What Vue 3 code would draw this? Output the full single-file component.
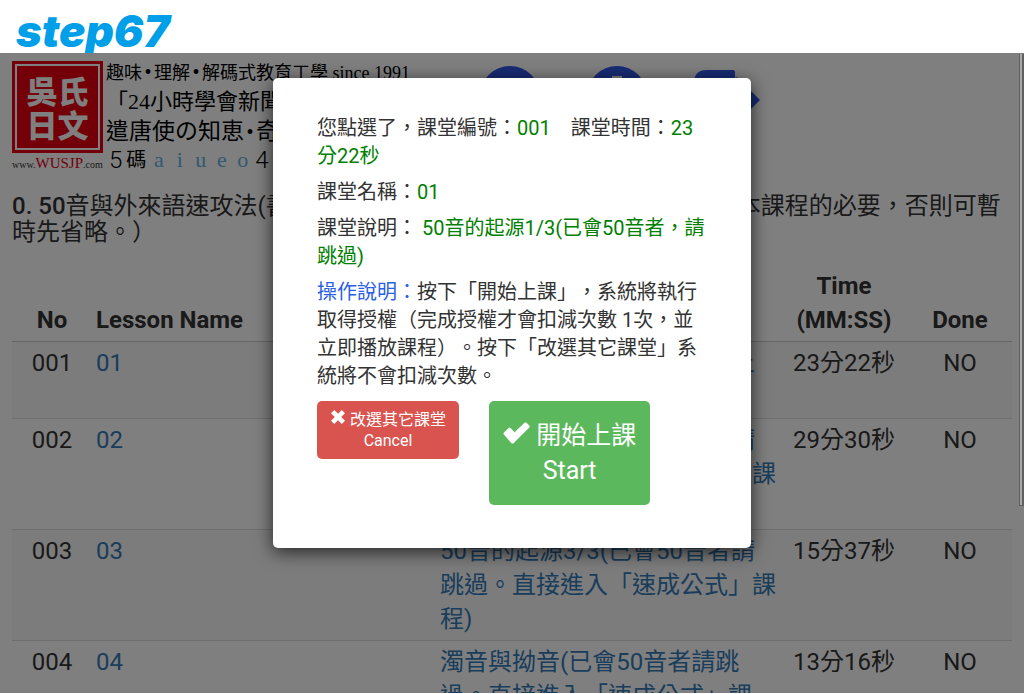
<template>
  <div class="tutorial">
    <h1 class="step-title">step67</h1>

    <div class="screen">
      <main class="page">
        <!-- Banner -->
        <header class="banner">
          <div class="brand">
            <div class="seal">
              <div class="seal-inner">
                <span>吳氏</span>
                <span>日文</span>
              </div>
            </div>
            <a href="#" class="site">www.<b>WUSJP</b>.com</a>
          </div>
          <div class="slogan">
            <p class="first">趣味<i>•</i>理解<i>•</i>解碼式教育工學 since 1991</p>
            <p>「24小時學會新聞」</p>
            <p class="third">遣唐使の知恵<i>•</i>奇蹟</p>
            <p class="codes">
              <span class="num">5</span>
              <span>碼</span>
              <span v-for="v in vowels" :key="v" class="vowel">{{ v }}</span>
              <span class="num">4</span>
            </p>
          </div>
          <nav class="nav-icons">
            <a href="#" aria-label="會員">
              <svg viewBox="0 0 60 60" width="60" height="60">
                <circle cx="30" cy="30" r="30" />
                <path class="hole" d="M24 26h12v20H24z" />
              </svg>
            </a>
            <a href="#" aria-label="說明">
              <svg viewBox="0 0 60 60" width="60" height="60">
                <circle cx="30" cy="30" r="30" />
                <path class="hole" d="M25 10h10v8H25zM21 24h14v20h4v6H21v-6h4V30h-4z" />
              </svg>
            </a>
            <a href="#" aria-label="登出">
              <svg viewBox="0 0 66 60" width="66" height="60">
                <path d="M13 0h26q2 0 2 2v8q0 2-2 2H17q-5 0-5 5v26q0 5 5 5h22q2 0 2 2v8q0 2-2 2H13Q0 60 0 47V13Q0 0 13 0z" />
                <path d="M66 30 44 52q-3 2-3-2V38H22q-2 0-2-2V24q0-2 2-2h19V10q0-4 3-2z" />
              </svg>
            </a>
          </nav>
        </header>

        <h2 class="course-title">
          <b>0. 50</b>音與外來語速攻法(書寫與閱讀日文 50 音尚不熟悉的同學，才有本課程的必要，否則可暫時先省略。）
        </h2>

        <!-- Lessons -->
        <table class="lessons">
          <colgroup>
            <col class="col-no" />
            <col class="col-name" />
            <col class="col-desc" />
            <col class="col-time" />
            <col class="col-done" />
          </colgroup>
          <thead>
            <tr>
              <th class="center">No</th>
              <th>Lesson Name</th>
              <th>Description</th>
              <th class="center">Time (MM:SS)</th>
              <th class="center">Done</th>
            </tr>
          </thead>
          <tbody>
            <tr v-for="lesson in lessons" :key="lesson.no">
              <td class="center">{{ lesson.no }}</td>
              <td><a href="#">{{ lesson.name }}</a></td>
              <td><a href="#">{{ lesson.desc }}</a></td>
              <td class="center">{{ lesson.time }}</td>
              <td class="center">NO</td>
            </tr>
          </tbody>
        </table>
      </main>

      <div class="backdrop"></div>
      <div class="scroll-thumb"></div>

      <!-- Confirm dialog -->
      <div v-if="isOpen" class="modal-layer">
        <div class="modal" role="dialog" aria-modal="true">
          <p>您點選了，課堂編號：<em>001</em>　課堂時間：<em>23分22秒</em></p>
          <p>課堂名稱：<em>01</em></p>
          <p>課堂說明： <em>50音的起源1/3(已會50音者，請跳過)</em></p>
          <p><strong>操作說明：</strong>按下「開始上課」，系統將執行取得授權（完成授權才會扣減次數 1次，並立即播放課程）。按下「改選其它課堂」系統將不會扣減次數。</p>
          <div class="actions">
            <button type="button" class="btn cancel" @click="isOpen = false">
              <svg viewBox="0 0 16 16" width="16" height="16">
                <path d="M4.2 1 8 4.8 11.8 1 15 4.2 11.2 8l3.8 3.8-3.2 3.2L8 11.2 4.2 15 1 11.8 4.8 8 1 4.2z" />
              </svg>
              改選其它課堂<br />Cancel
            </button>
            <button type="button" class="btn start" @click="isOpen = false">
              <svg viewBox="0 0 27 22" width="27" height="22">
                <path d="M1.5 10 5.5 6q1-.8 2 0l4 4.200L21.500.7q1-.9 2 0l2.800 2.800q.9 1 0 2L10.500 21.200q-1 .8-2 0L.8 12.500q-1-1.400.7-2.500z" />
              </svg>
              開始上課<br />Start
            </button>
          </div>
        </div>
      </div>
    </div>
  </div>
</template>

<script setup>
import { ref } from 'vue'

const isOpen = ref(true)

const vowels = ['a', 'i', 'u', 'e', 'o']

const lessons = [
  { no: '001', name: '01', desc: '50音的起源1/3(未學50音者上課，請由此開始)', time: '23分22秒' },
  { no: '002', name: '02', desc: '50音的起源2/3(已會50音者請跳過。直接進入「速成公式」課程)', time: '29分30秒' },
  { no: '003', name: '03', desc: '50音的起源3/3(已會50音者請跳過。直接進入「速成公式」課程)', time: '15分37秒' },
  { no: '004', name: '04', desc: '濁音與拗音(已會50音者請跳過。直接進入「速成公式」課程)', time: '13分16秒' },
]
</script>

<style>
body {
  margin: 0;
  background: #fff;
}
</style>

<style scoped>
.tutorial {
  display: flex;
  flex-direction: column;
  height: 100vh;
  box-sizing: border-box;
  padding-bottom: 1px;
  font-family: Roboto, 'Noto Sans CJK TC', sans-serif;
  text-spacing-trim: space-all;
  color: #333;
}

.step-title {
  flex: none;
  height: 53px;
  margin: 0;
  padding-left: 16px;
  overflow: hidden;
  font-family: Inter, 'Liberation Sans', sans-serif;
  font-size: 44px;
  font-weight: 900;
  font-style: italic;
  line-height: 62px;
  color: #009fe8;
}

.screen {
  position: relative;
  flex: 1;
  min-height: 0;
  overflow: hidden;
}

.page {
  padding: 8px 12px 0;
}

a {
  color: #337ab7;
  text-decoration: none;
}

/* banner */
.banner {
  display: flex;
  height: 132px;
}

.brand {
  flex: none;
  width: 94px;
}

.seal {
  width: 91px;
  box-sizing: border-box;
  padding: 3px;
  background: #e60012;
}

.seal-inner {
  display: flex;
  flex-direction: column;
  align-items: center;
  padding: 7px 0;
  border: 2px solid #fff;
  font-family: 'Noto Sans CJK TC', sans-serif;
  font-size: 31px;
  font-weight: 900;
  line-height: 34px;
  color: #fff;
}

.site {
  display: block;
  font-family: 'Liberation Serif', serif;
  font-size: 10px;
  line-height: 20px;
  color: #333;
  white-space: nowrap;
}

.site b {
  font-size: 15px;
  font-weight: 400;
  color: #e60012;
}

.slogan {
  width: 330px;
  font-family: 'Liberation Serif', 'Noto Sans CJK TC', serif;
  font-size: 22px;
  line-height: 30px;
  color: #000;
  white-space: nowrap;
}

.slogan p {
  margin: 0;
}

.slogan .first {
  font-size: 18px;
  line-height: 24px;
  padding-bottom: 2px;
}

.slogan .third {
  font-size: 23px;
}

.slogan i {
  display: inline-block;
  width: 12px;
  font-size: 20px;
  line-height: 20px;
  font-style: normal;
  text-align: center;
}

.slogan .codes {
  display: flex;
  align-items: center;
  gap: 4px;
  padding-left: 3px;
  font-size: 20px;
  line-height: 26px;
}

.codes .num {
  font-family: Roboto, sans-serif;
  font-size: 24px;
  font-weight: 300;
}

.codes .vowel {
  width: 17px;
  font-size: 22px;
  text-align: center;
  color: #64b4e2;
}

.nav-icons {
  display: flex;
  gap: 47px;
  padding: 5px 0 0 44px;
}

.nav-icons svg {
  display: block;
  fill: #3058e8;
}

.nav-icons a:last-child {
  padding-top: 4px;
}

.nav-icons .hole {
  fill: #fff;
}

.course-title {
  margin: 0 0 20px;
  font-size: 24px;
  font-weight: 400;
  line-height: 26px;
}

.course-title b {
  font-weight: 500;
}

/* lesson table */
.lessons {
  width: 100%;
  table-layout: fixed;
  border-collapse: collapse;
  font-size: 24px;
  line-height: 34px;
}

.col-no { width: 8%; }
.col-name { width: 34.4%; }
.col-desc { width: 34.4%; }
.col-time { width: 12.8%; }
.col-done { width: 10.4%; }

.lessons th,
.lessons td {
  padding: 4px;
  text-align: left;
  vertical-align: top;
}

.lessons th {
  vertical-align: bottom;
  font-weight: 700;
  border-bottom: 1px solid #ccc;
}

.lessons td {
  border-top: 1px solid #ddd;
}

.lessons .center {
  text-align: center;
}

.lessons tbody tr:nth-child(odd) {
  background: #f9f9f9;
}

/* overlay */
.backdrop {
  position: absolute;
  inset: 0;
  background: rgba(0, 0, 0, 0.5);
}

.scroll-thumb {
  position: absolute;
  top: 1px;
  right: 0;
  width: 2px;
  height: 451px;
  background: #a8a8a8;
  border: solid #606060;
  border-width: 0 2px 1px 1px;
}

.modal-layer {
  position: absolute;
  inset: 0;
  display: flex;
  align-items: flex-start;
  justify-content: center;
  padding-top: 25px;
}

.modal {
  width: 478px;
  box-sizing: border-box;
  padding: 36px 44px 43px;
  border-radius: 5px;
  background: #fff;
  box-shadow: 0 4px 18px rgba(0, 0, 0, 0.7);
  font-size: 20px;
  line-height: 28px;
}

.modal p {
  margin: 0 0 8px;
}

.modal em {
  font-style: normal;
  color: #008000;
}

.modal strong {
  font-weight: 400;
  color: #2a5fe8;
}

.actions {
  display: flex;
  align-items: flex-start;
  gap: 30px;
  padding-top: 3px;
}

.btn {
  border: none;
  border-radius: 5px;
  font-family: inherit;
  color: #fff;
  cursor: pointer;
}

.btn svg {
  fill: #fff;
}

.cancel {
  padding: 8px 13px;
  background: #d9534f;
  font-size: 16px;
  line-height: 21px;
}

.start {
  padding: 17px 14px;
  background: #5cb85c;
  font-size: 25px;
  line-height: 35px;
}
</style>
